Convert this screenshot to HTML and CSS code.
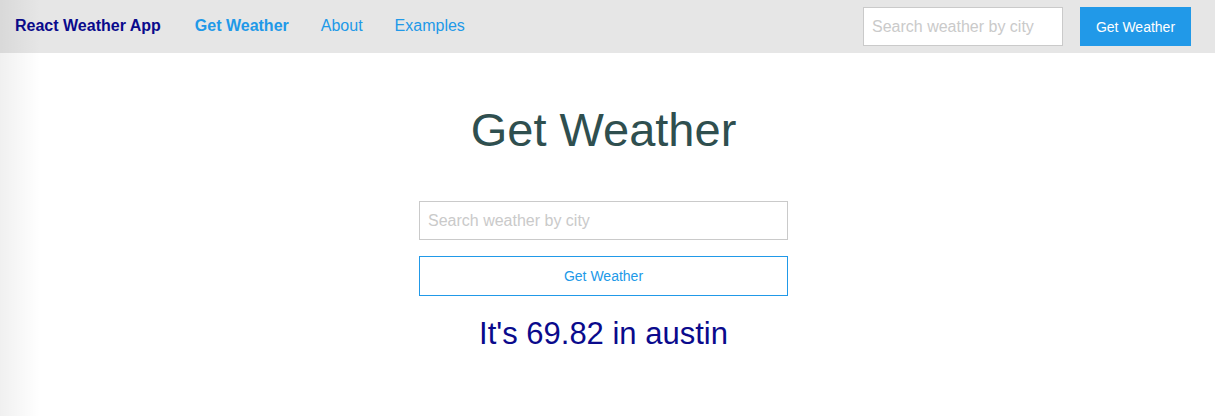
FILE: index.html
```html
<!DOCTYPE html>
<html>
<head>
<meta charset="utf-8">
<link rel="stylesheet" href="styles.css">
</head>
<body>
<div class="shade"></div>
<nav class="topbar">
  <ul class="menu">
    <li class="brand">React Weather App</li>
    <li><a class="active">Get Weather</a></li>
    <li><a>About</a></li>
    <li><a>Examples</a></li>
  </ul>
  <form class="navsearch">
    <input class="navinput" type="search" placeholder="Search weather by city">
    <button class="navbtn" type="button">Get Weather</button>
  </form>
</nav>
<main class="content">
  <h1 class="title">Get Weather</h1>
  <form class="weather-form">
    <input class="field" type="search" placeholder="Search weather by city">
    <button class="hollow" type="button">Get Weather</button>
  </form>
  <h3 class="result">It's 69.82 in austin</h3>
</main>
</body>
</html>
```
FILE: styles.css
```css
* { box-sizing: border-box; }
html, body { margin: 0; padding: 0; }
body {
  font-family: "Liberation Sans", Arial, sans-serif;
  background: #fff;
  width: 1215px;
  height: 416px;
  overflow: hidden;
  position: relative;
}
.shade {
  position: absolute;
  left: 0; top: 0; bottom: 0;
  width: 40px;
  background: linear-gradient(to right, rgba(0,0,0,0.06), rgba(0,0,0,0));
  pointer-events: none;
  z-index: 2;
}
.topbar {
  height: 53px;
  background: #e6e6e6;
  display: flex;
  align-items: center;
  justify-content: space-between;
  padding: 0 24px 0 15px;
}
.menu {
  list-style: none;
  margin: 0;
  padding: 0 0 1px;
  display: flex;
  align-items: center;
  gap: 32px;
  font-size: 16px;
  line-height: 20px;
}
.brand { font-weight: bold; color: #0a0a8c; margin-right: 2px; }
.menu a { color: #2199e8; cursor: pointer; }
.menu a.active { font-weight: bold; }
.navsearch { display: flex; align-items: center; gap: 17px; }
.navinput {
  width: 200px;
  height: 39px;
  border: 1px solid #cacaca;
  background: #fff;
  padding: 0 8px;
  font: 16px "Liberation Sans", Arial, sans-serif;
  color: #0a0a0a;
  outline: none;
  margin: 0;
}
.navinput::placeholder, .field::placeholder { color: #cacaca; }
.navbtn {
  width: 111px;
  height: 39px;
  background: #2199e8;
  border: none;
  color: #fefefe;
  font: 14px "Liberation Sans", Arial, sans-serif;
  margin: 0;
  padding: 0;
}
.content {
  display: flex;
  flex-direction: column;
  align-items: center;
  padding-right: 8px;
}
.title {
  margin: 48px 0 0;
  font-weight: normal;
  font-size: 47px;
  line-height: 58px;
  color: #2f4f4f;
}
.weather-form {
  width: 369px;
  margin-top: 42px;
  display: flex;
  flex-direction: column;
  gap: 16px;
}
.field {
  width: 100%;
  height: 39px;
  border: 1px solid #cacaca;
  padding: 0 8px;
  font: 16px "Liberation Sans", Arial, sans-serif;
  margin: 0;
  outline: none;
}
.hollow {
  width: 100%;
  height: 40px;
  border: 1px solid #2199e8;
  background: transparent;
  color: #2199e8;
  font: 14px "Liberation Sans", Arial, sans-serif;
  margin: 0;
}
.result {
  margin: 18px 0 0;
  font-weight: normal;
  font-size: 31px;
  line-height: 40px;
  color: #0a0a8c;
}
```
